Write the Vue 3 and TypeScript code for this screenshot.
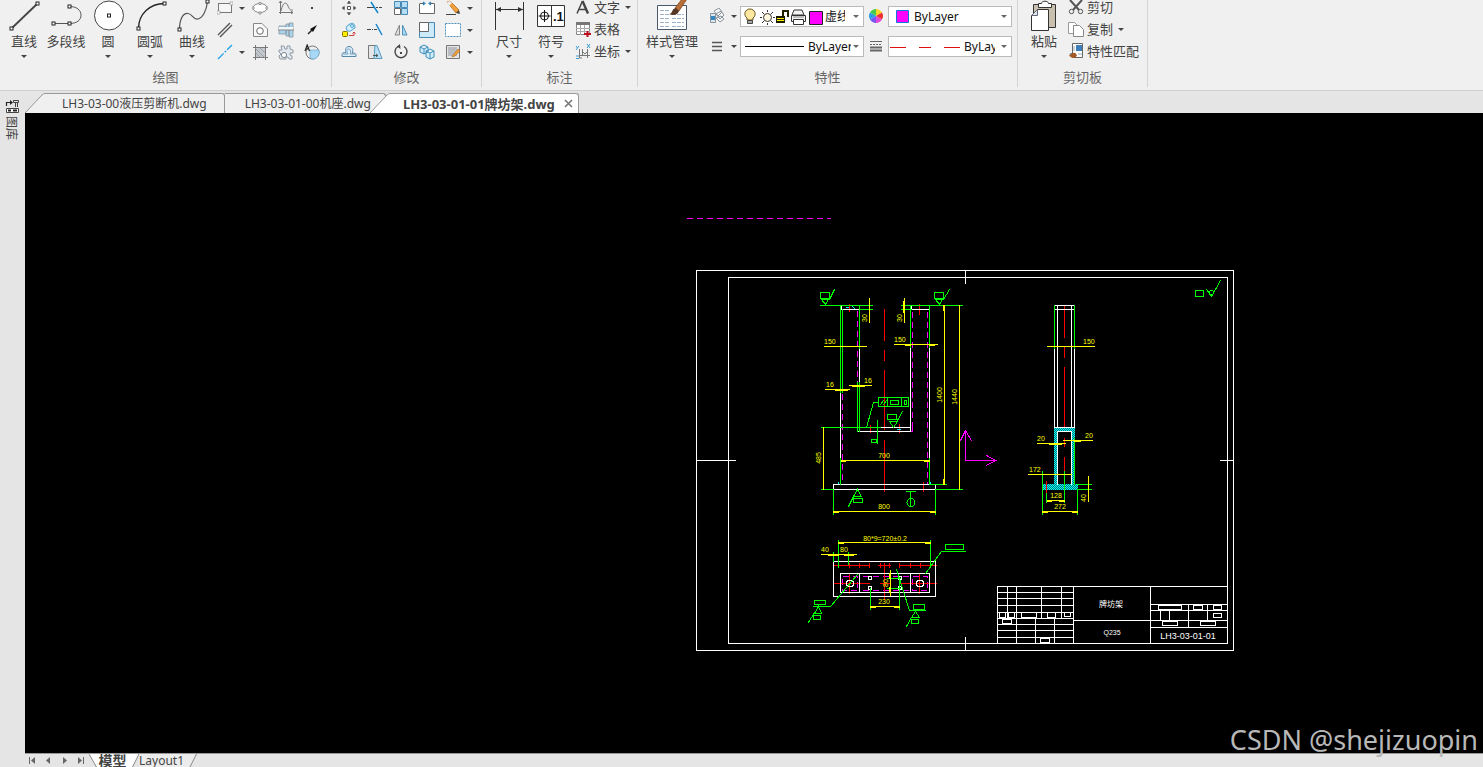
<script setup lang="ts">
import { ref } from 'vue'

interface Tool {
  name: string
  icon: string
  menu?: boolean
}

const node = (x: number, y: number) =>
  `<rect x="${x - 1.5}" y="${y - 1.5}" width="3" height="3" fill="#fff" stroke="#222" stroke-width="1"/>`

const drawLarge: Tool[] = [
  { name: '直线', menu: true, icon: `<path d="M8.500 28.500L34.500 3.500" stroke="#444" stroke-width="1.800"/>${node(8.5, 28.5)}${node(34.5, 3.5)}` },
  { name: '多段线', icon: `<path d="M8.500 23.500H24.500C32 23.500 36 20 36 15.200S32 6.500 24.500 6.500" stroke="#555"/>${node(8.5, 23.5)}${node(24.5, 23.5)}${node(24.5, 6.5)}` },
  { name: '圆', menu: true, icon: `<circle cx="22" cy="15.500" r="14.500" fill="#fff" stroke="#444"/>${node(22, 15.5)}` },
  { name: '圆弧', menu: true, icon: `<path d="M9.500 28.500C9.500 14 21 3.500 35.500 3.500" stroke="#222" stroke-width="1.300"/>${node(9.5, 28.5)}${node(35.5, 3.5)}` },
  { name: '曲线', menu: true, icon: `<path d="M8.500 29.500C8.500 19 12 13 17 13.500S22 20 27 19S35.500 10 36.500 1.500" stroke="#555" stroke-width="1.200"/>${node(8.5, 29.5)}${node(36.5, 1.5)}` },
]

const drawSmall: Tool[] = [
  { name: '矩形', menu: true, icon: '<rect x="1.500" y="3.500" width="13" height="9" fill="#f6f6f6" stroke="#777"/><path d="M0 11h3v3H0zM13 2h3v3h-3z" fill="#fff" stroke="#999" stroke-width=".7"/>' },
  { name: '椭圆', icon: '<ellipse cx="8" cy="8" rx="7" ry="4.500" fill="#fff" stroke="#888"/><path d="M7 2.500h2v2H7zM0 7h2v2H0zM14 7h2v2h-2zM7 12h2v2H7z" fill="#fff" stroke="#777" stroke-width=".7"/>' },
  { name: '函数曲线', icon: '<path d="M2.500 1V14M1 12.500H15M3 11C5 2 8 1 10 6S13 10 15 10M1 3l1.500-2L4 3M13 11l2 1.500-2 1.500" stroke="#777"/>' },
  { name: '点', icon: '<path d="M7 7h2v2H7z" fill="#444"/>' },
  { name: '平行线', icon: '<path d="M1 13L13 1M3 15L15 3" stroke="#555" stroke-width="1.400"/>' },
  { name: '孔', icon: '<path d="M1.500 1.500H10L15.500 7V14.500H1.500z" fill="#f8f8f8" stroke="#888"/><circle cx="8" cy="9" r="3.300" fill="#fff" stroke="#666"/>' },
  { name: '轴', icon: '<path d="M1 4h7v8H1zM8 2h3v12H8zM11 1h4v14h-4z" fill="#a9d4f0" stroke="#8a949c" stroke-width=".8"/><path d="M1 5h14v3H1z" fill="#eef6fc"/><path d="M0 8H16" stroke="#888"/>' },
  { name: '箭头', icon: '<path d="M4 12L9 7" stroke="#222" stroke-width="1.400"/><path d="M13 3L6 7l3 3z" fill="#111"/>' },
  { name: '中心线', menu: true, icon: '<path d="M1 15L15 1" stroke="#1aa0e8" stroke-width="1.300" stroke-dasharray="8 1.500 2 1.500"/>' },
  { name: '填充', icon: '<path d="M3 3h11v11H3z" fill="#c4c8cc"/><path d="M1 3.500H16M1 13.500H16M3.500 1V16M13.500 1V16" stroke="#777"/><path d="M3 8l6 6M3 4l10 10M7 3l7 7" stroke="#8d959d" stroke-width=".8"/>' },
  { name: '齿轮', icon: '<path d="M3 2h3l1 3h2V2h3v3l3 1v3h-3v2l2 1v3h-3l-1-2H8v2H2l-1-3 2-2-2-2V6h3z" fill="#e2e8ef" stroke="#8f99a3"/><circle cx="6" cy="11" r="2.600" fill="#fff" stroke="#7c8791"/>' },
  { name: '局部放大', icon: '<circle cx="8.500" cy="8.500" r="6.500" stroke="#777"/><path d="M6 6h9v4c-1 3-3 5-6 5-2 0-3-1-3-3z" fill="#a7d8f5" stroke="#69a9cf" stroke-width=".7"/><path d="M1 7L3.200 1 5.500 7M2 5h3" stroke="#222" stroke-width="1.200"/>' },
]

const modifySmall: Tool[] = [
  { name: '移动', icon: '<path d="M6.500 6.500h3v3h-3z" fill="#fff" stroke="#555"/><path d="M8 1v3M8 12v3M1 8h3M12 8h3" stroke="#444"/><path d="M5.500 3.500L8 1l2.500 2.500zM5.500 12.500L8 15l2.500-2.500zM3.500 5.500L1 8l2.500 2.500zM12.500 5.500L15 8l-2.500 2.500z" fill="#555"/>' },
  { name: '修剪', icon: '<path d="M0 7.500H7M9 7.500h2M12 7.500h3" stroke="#444"/><path d="M4 2L11 13" stroke="#1686d0" stroke-width="1.500"/>' },
  { name: '阵列', icon: '<path d="M1.500 1.500h6v6h-6zM8.500 1.500h6v6h-6zM8.500 8.500h6v6h-6z" fill="#b4ddf5" stroke="#4689b4"/><path d="M1.500 8.500h6v6h-6z" fill="#fff" stroke="#666"/>' },
  { name: '打断', icon: '<path d="M1 3.500H5M11 3.500h4.500V13.500H.5V3.500" fill="#fff" stroke="#666"/><path d="M4 2l2 1.500L4 5M12 2l-2 1.500L12 5" stroke="#2385c0" stroke-width="1.200"/>' },
  { name: '删除', menu: true, icon: '<path d="M2 2L5 1 14 10 11 13z" fill="#f0a13b" stroke="#b76b1e" stroke-width=".8"/><path d="M2 2L5 1l2 2-3 3z" fill="#eee"/><path d="M11 13l3-3 1 4z" fill="#444"/><path d="M1 14.500H11" stroke="#444"/>' },
  { name: '复制对象', icon: '<rect x="1.500" y="9.500" width="5" height="5" rx="1" fill="#ffed00" stroke="#887500"/><rect x="5" y="2" width="9" height="6" rx="3" transform="rotate(-35 10 5)" fill="#d7f0ff" stroke="#58a8d2"/><circle cx="11" cy="4" r="1.500" stroke="#58a8d2"/><path d="M8 13.500h5V10M11.500 11.500L13 10l1.500 1.500" stroke="#c44"/>' },
  { name: '延伸', icon: '<path d="M0 7.500h4M5 7.500h1M7 7.500h3" stroke="#444"/><path d="M9 2L15 13" stroke="#1686d0" stroke-width="1.500"/>' },
  { name: '镜像', icon: '<path d="M6.500 3v10H2z" fill="#ddd" stroke="#888"/><path d="M9.500 3v10H14z" fill="#a7d9f5" stroke="#4f91b7"/>' },
  { name: '缩放', icon: '<path d="M.5 .5h15v15H.5z" fill="#cdeafb" stroke="#4689b4"/><path d="M.5 .5h9v9h-9z" fill="#fff" stroke="#666"/>' },
  { name: '拉伸', menu: true, icon: '<path d="M.5 1.500h15v13H.5z" fill="#fff" stroke="#4b91b9" stroke-dasharray="2 1"/>' },
  { name: '偏移', icon: '<path d="M1 12.500h14v-2c0-1-2-2-4-1 2-4 0-7-3-7s-4 3-3 6c-2 0-4 0-4 2z" fill="#dceffc" stroke="#5887a8"/><path d="M2 10h5C5 6 6 5 8 5s2 3 1 5h5" stroke="#7ba2bc"/>' },
  { name: '倾斜', icon: '<path d="M1.500 1.500h8v13h-8z" fill="#e6e6e6" stroke="#777"/><path d="M8 1.500h2L15 14.500H7z" fill="#b9e0f6" stroke="#5a9ac0"/><path d="M6 11.500h5M9 10l2 1.500L9 13" stroke="#555"/>' },
  { name: '旋转', icon: '<path d="M5 2.500A6 6 0 1 0 11 2.500" stroke="#444" stroke-width="1.400"/><path d="M7 0L4 2.500 7.500 5z" fill="#444"/><path d="M7 8h2v2H7z" fill="#444"/>' },
  { name: '分解', icon: '<path d="M1 3l4-2 4 2v5l-4 2-4-2zM1 3l4 2 4-2M5 5v5M7 7l4-2 4 2v6l-4 2-4-2zM7 7l4 2 4-2M11 9v6" fill="#d4edfb" stroke="#418fb9"/>' },
  { name: '编辑填充', menu: true, icon: '<path d="M1.500 1.500h13v13h-13z" fill="#e4e4e4" stroke="#777"/><path d="M3 3h9v9H3z" fill="#b9bdc1"/><path d="M8 11l5-6 2 2-5 5-3 1z" fill="#f0a13b" stroke="#a46a27" stroke-width=".6"/>' },
]

const annotateLarge: Tool[] = [
  { name: '尺寸', menu: true, icon: '<path d="M7.500 2V30M35.500 2V30M8 9.500H35" stroke="#333"/><path d="M8 9.500l5-2.500v5zM35 9.500L30 7v5z" fill="#333"/>' },
  { name: '符号', menu: true, icon: '<path d="M7.500 5.500h27v21h-27zM21.500 5.500v21" fill="#fff" stroke="#333"/><circle cx="14.500" cy="16" r="4" stroke="#111"/><path d="M8.500 16h12M14.500 10v12" stroke="#111"/><text x="23" y="21" font-family="Liberation Sans, sans-serif" font-weight="700" font-size="13" fill="#111">.1</text>' },
]

const annotateRows: Tool[] = [
  { name: '文字', menu: true, icon: '<path d="M2 14.500L7.500 2M4 10.500h7" stroke="#444" stroke-width="1.500"/><path d="M7.500 2L13 14.500" stroke="#444" stroke-width="2.400"/>' },
  { name: '表格', icon: '<path d="M1.500 1.500h13v12h-13z" fill="#fff" stroke="#888"/><path d="M1 1h14v3H1z" fill="#777"/><path d="M1 7.500h14M1 10.500h14M5.500 4v10M9.500 4v10" stroke="#aaa"/><path d="M9 13h7M12.500 10v6" stroke="#c00d1c" stroke-width="2"/>' },
  { name: '坐标', menu: true, icon: '<path d="M4.500 6v9H7M4 12.500h11M7.500 6v7M12.500 6v9M7 8l3 3 3-3" stroke="#777"/><path d="M1 3l1.500 2M4 3L1 7M12 1l3 4M15 1l-3 4M1 13h3M1 15.500h3" stroke="#3b9bd0"/>' },
]

const styleIcon =
  '<path d="M6.500 5.500h29v24h-29z" fill="#fff" stroke="#46586a"/><path d="M9 10.500h9M9 14.500h9M9 18.500h9M9 22.500h9M9 26.500h9M21 14.500h12M21 18.500h12M21 22.500h12M21 26.500h12" stroke="#9cb0c6" stroke-dasharray="4 1"/><path d="M24 8L31-1h5L28 11z" fill="#b86e36" stroke="#70401d" stroke-width=".7"/><path d="M18 14c4 0 2-5 7-6l3 3c-1 4-6 5-10 3z" fill="#553523"/>'
const pasteIcon =
  '<path d="M10.500 4.500h22v23h-22z" fill="#c9bfae" stroke="#333"/><path d="M15.500 3.500h3c0-3 7-3 7 0h3v4h-13z" fill="#fff" stroke="#333"/><path d="M14.500 9.500h11v21h-17v-15z" fill="#fff" stroke="#333"/><path d="M8.500 15.500l6-6v6z" fill="#dde4ec" stroke="#667"/>'

const clipRows: Tool[] = [
  { name: '剪切', icon: '<path d="M2 1l9 10M14 1L5 11" stroke="#555" stroke-width="2"/><circle cx="3.500" cy="12.500" r="2.200" fill="#eee" stroke="#555"/><circle cx="12.500" cy="12.500" r="2.200" fill="#eee" stroke="#555"/>' },
  { name: '复制', menu: true, icon: '<path d="M.5 1.500h6l3 3v8h-9z" fill="#fff" stroke="#999"/><path d="M5.500 4.500h6l4 4v7h-10z" fill="#fff" stroke="#888"/>' },
  { name: '特性匹配', icon: '<path d="M4.500 .5h10v14h-10z" fill="#fff" stroke="#666"/><path d="M8 2h6v6H8z" fill="#3c7fba"/><path d="M6 3v5M6 11h2M10 11h4" stroke="#9ab"/><path d="M1 12c3 0 3-3 6-2l2 2c-1 4-6 4-8 0z" fill="#a35a24"/><path d="M1 11l3-1v2z" fill="#666"/>' },
]

const fileTabs = ['LH3-03-00液压剪断机.dwg', 'LH3-03-01-00机座.dwg', 'LH3-03-01-01牌坊架.dwg']
const activeTab = ref(2)
const navIcons: Tool[] = [
  { name: '第一个', icon: '<path d="M1.500 2v7" stroke="#666"/><path d="M7 2v7L3 5.500z" fill="#666"/>' },
  { name: '上一个', icon: '<path d="M6 2v7L2 5.500z" fill="#666"/>' },
  { name: '下一个', icon: '<path d="M3 2v7l4-3.500z" fill="#666"/>' },
  { name: '最后一个', icon: '<path d="M2 2v7l4-3.500z" fill="#666"/><path d="M7.500 2v7" stroke="#666"/>' },
]

interface Label {
  t: string
  x: number
  y: number
  up?: boolean
  mid?: boolean
}

const dims: Label[] = [
  { t: '30', x: 867, y: 318, up: true },
  { t: '30', x: 902, y: 318, up: true },
  { t: '150', x: 824, y: 344 },
  { t: '150', x: 894, y: 342 },
  { t: '16', x: 826, y: 387 },
  { t: '16', x: 864, y: 383 },
  { t: '1400', x: 942, y: 395, up: true },
  { t: '1440', x: 957, y: 397, up: true },
  { t: '485', x: 821, y: 458, up: true },
  { t: '700', x: 884, y: 458, mid: true },
  { t: '800', x: 884, y: 509, mid: true },
  { t: '80*9=720±0.2', x: 885, y: 541, mid: true },
  { t: '40', x: 821, y: 552 },
  { t: '80', x: 840, y: 552 },
  { t: '80', x: 888, y: 583, up: true },
  { t: '230', x: 884, y: 604, mid: true },
  { t: '150', x: 1083, y: 344 },
  { t: '20', x: 1037, y: 441 },
  { t: '20', x: 1085, y: 438 },
  { t: '172', x: 1029, y: 472 },
  { t: '128', x: 1056, y: 498, mid: true },
  { t: '272', x: 1060, y: 509, mid: true },
  { t: '40', x: 1086, y: 498, up: true },
]
</script>

<template>
  <div class="app">
    <header class="ribbon">
      <section class="group draw">
        <div class="tools">
          <button v-for="t in drawLarge" :key="t.name" class="large">
            <svg width="42" height="32" v-html="t.icon"></svg>
            <span>{{ t.name }}</span>
            <i v-if="t.menu" class="caret"></i>
          </button>
          <div class="small draw-grid">
            <button v-for="t in drawSmall" :key="t.name" class="mini" :aria-label="t.name">
              <svg width="16" height="16" v-html="t.icon"></svg>
              <i v-if="t.menu" class="caret"></i>
            </button>
          </div>
        </div>
        <h2>绘图</h2>
      </section>

      <section class="group modify">
        <div class="tools">
          <div class="small modify-grid">
            <button v-for="t in modifySmall" :key="t.name" class="mini" :aria-label="t.name">
              <svg width="16" height="16" v-html="t.icon"></svg>
              <i v-if="t.menu" class="caret"></i>
            </button>
          </div>
        </div>
        <h2>修改</h2>
      </section>

      <section class="group annotate">
        <div class="tools">
          <button v-for="t in annotateLarge" :key="t.name" class="large">
            <svg width="42" height="32" v-html="t.icon"></svg>
            <span>{{ t.name }}</span>
            <i class="caret"></i>
          </button>
          <div class="rows">
            <button v-for="t in annotateRows" :key="t.name" class="row">
              <svg width="16" height="16" v-html="t.icon"></svg>
              <span>{{ t.name }}</span>
              <i v-if="t.menu" class="caret"></i>
            </button>
          </div>
        </div>
        <h2>标注</h2>
      </section>

      <section class="group props">
        <div class="tools">
          <button class="large wide">
            <svg width="42" height="32" v-html="styleIcon"></svg>
            <span>样式管理</span>
            <i class="caret"></i>
          </button>
          <div class="prop-grid">
            <button class="mini" aria-label="图层">
              <svg width="16" height="16">
                <path d="M5 3l5-3 3 4-4 4zM7 6l5-3 3 4-4 4zM7 10l5-2 3 3-4 3z" fill="#f4f4f4" stroke="#8a949d" />
                <path d="M1.500 5.500h5v9h-5z" fill="#dfe6ec" stroke="#8a949d" />
                <path d="M2 8h4v4H2z" fill="#3387c2" />
              </svg>
              <i class="caret"></i>
            </button>
            <div class="combo layer">
              <svg width="80" height="19" class="layer-icons">
                <path d="M6 11C2 8 4 2 9 2s7 6 3 9v2H6z" fill="#ffe9a0" stroke="#66521d" />
                <path d="M6.500 13.500h5v3h-5z" fill="#aaa" stroke="#444" />
                <circle cx="26.500" cy="10.500" r="4" fill="#fff7dc" stroke="#333" />
                <path d="M26.500 3v2M26.500 16v2M19 10.500h2M32 10.500h2M21 5l2 2M30 14l2 2M32 5l-2 2M23 14l-2 2" stroke="#333" />
                <path d="M35 9h9v7h-9z" fill="#1c1c00" />
                <path d="M36 11.500h7M36 13.500h7" stroke="#ffef00" />
                <path d="M42 9V4h5v6" stroke="#222200" stroke-width="2" fill="none" />
                <path d="M53 3h8l2 5H51zM50.500 8.500h14v6h-14z" fill="#f4f4f4" stroke="#333" />
                <path d="M52.500 12.500h10v5h-10z" fill="#fff" stroke="#333" />
                <path d="M52 10h11" stroke="#888" />
                <path d="M68.500 4.500h13v13h-13z" fill="#f0f" stroke="#222" />
              </svg>
              <select aria-label="当前图层"><option>虚线层</option></select>
              <i class="caret"></i>
            </div>
            <svg width="14" height="14" class="between">
              <path d="M7 7V0A7 7 0 0 1 13 3.500z" fill="#f9d624" />
              <path d="M7 7L13 3.500A7 7 0 0 1 13 10.500z" fill="#f22e2e" />
              <path d="M7 7L13 10.500A7 7 0 0 1 7 14z" fill="#e447d6" />
              <path d="M7 7V14A7 7 0 0 1 1 10.500z" fill="#7757ee" />
              <path d="M7 7L1 10.500A7 7 0 0 1 1 3.500z" fill="#2a9ae8" />
              <path d="M7 7L1 3.500A7 7 0 0 1 7 0z" fill="#47c94d" />
            </svg>
            <div class="combo">
              <svg width="25" height="19"><path d="M7.500 3.500h12v12h-12z" fill="#f0f" stroke="#0877d5" /></svg>
              <select aria-label="颜色"><option>ByLayer</option></select>
              <i class="caret"></i>
            </div>
            <button class="mini" aria-label="线宽">
              <svg width="16" height="16"><path d="M3 4.500h10M3 8.500h10M3 12.500h10" stroke="#555" stroke-width="1.500" /></svg>
              <i class="caret"></i>
            </button>
            <div class="combo">
              <svg width="67" height="19"><path d="M4 9.500H63" stroke="#000" /></svg>
              <select aria-label="线型"><option>ByLayer</option></select>
              <i class="caret"></i>
            </div>
            <svg width="14" height="14" class="between">
              <path d="M1 2.500h12" stroke="#666" />
              <path d="M1 5.500h12" stroke="#666" stroke-dasharray="2 1" />
              <path d="M1 8.500h12M1 11.500h12" stroke="#666" stroke-width="2" />
            </svg>
            <div class="combo short">
              <svg width="75" height="19"><path d="M1 10.500h16M30 10.500h12M55 10.500h16" stroke="#e01010" /></svg>
              <select aria-label="线宽样式"><option>ByLayer</option></select>
              <i class="caret"></i>
            </div>
          </div>
        </div>
        <h2>特性</h2>
      </section>

      <section class="group clip">
        <div class="tools">
          <button class="large">
            <svg width="42" height="32" v-html="pasteIcon"></svg>
            <span>粘贴</span>
            <i class="caret"></i>
          </button>
          <div class="rows">
            <button v-for="t in clipRows" :key="t.name" class="row">
              <svg width="16" height="16" v-html="t.icon"></svg>
              <span>{{ t.name }}</span>
              <i v-if="t.menu" class="caret"></i>
            </button>
          </div>
        </div>
        <h2>剪切板</h2>
      </section>
    </header>

    <div class="body">
      <aside class="side">
        <button class="library">
          <svg width="15" height="16">
            <path d="M1.500 8V4.500H6" stroke="#222" stroke-width="1.200" />
            <path d="M5 2l3 2.500L5 7z" fill="#222" />
            <path d="M8.500 2.500h5v2h-5zM10.500 5v4M12.500 5v4" stroke="#444" />
            <path d="M1.500 10.500h12v4h-12z" fill="#fff" stroke="#444" />
            <path d="M3 12.500h3M8 12.500h4" stroke="#222" stroke-width="2" />
          </svg>
          <span>图库</span>
        </button>
      </aside>

      <div class="work">
        <nav class="tabs">
          <button
            v-for="(name, i) in fileTabs"
            :key="name"
            class="tab"
            :class="{ on: activeTab === i, inner: i === 1 }"
            @click="activeTab = i"
          >
            <svg v-if="i !== 1" width="20" height="20" class="slope">
              <path d="M0 20L17 2Q18.500 .5 20 .5V20z" class="slope-fill" />
              <path d="M0 20L17 2Q18.500 .5 20 .5" class="slope-line" />
            </svg>
            <span class="tab-face">{{ name }}<svg v-if="activeTab === i" width="9" height="9" class="close"><path d="M1 1l7 7M8 1L1 8" stroke="#777" stroke-width="1.600" /></svg></span>
          </button>
        </nav>

        <main class="canvas">
          <svg class="drawing" role="img" aria-label="LH3-03-01-01牌坊架">
            <defs>
              <pattern id="hatch" width="2" height="2" patternUnits="userSpaceOnUse">
                <path d="M0 0h2v2H0z" fill="#077" />
                <path d="M0 0h1v1H0zM1 1h1v1H1z" fill="#0ff" />
              </pattern>
            </defs>
            <g transform="translate(-25 -113)">
              <path fill="url(#hatch)" fill-rule="evenodd" d="M1054 427H1075V484H1078V490H1042V484H1054zM1058 432V484H1071V432z" />
              <g transform="translate(.5 .5)" class="lines">
                <g class="magenta">
                  <path class="dash" d="M686 218H830M842 393V484M857 310V382M912 311V431M927 311V484" />
                  <path class="dash" d="M842 576H857V590H842zM912 576H927V590H912zM862 576H908M862 590H908" />
                  <path d="M910 431H912V427M965 460V430M960 440L965 430 971 440M965 460H995M986 455L995 460 986 465" />
                </g>

                <g class="red">
                  <path d="M849 304V311M919 304V314M884 309V340M884 350V360M884 370V429M884 440V491M870 425V432M899 424V432M923 482V491" />
                  <path d="M833 565H868M878 565H890M899 565H936M849 563V567M859 563V567M869 563V567M880 563V567M889 563V567M899 563V567M910 563V567M920 563V567M884 563V599M833 583H869M880 583H889M900 583H936M849 573V593M919 573V593" />
                  <path d="M1064 306V337M1064 347V357M1064 367V426M1064 438V446M1064 457V471M1046 481V492" />
                </g>

                <g class="white">
                  <path d="M696 270H1233V650H696zM728 277H1227V643H728zM965 270V283M965 637V650M696 460H735M1220 460H1233" />
                  <path d="M841 305H859V309H841zM911 305H929V309H911zM840 392V458M859 349V382M910 348V431M929 348V458M881 427H910M857 431H910M833 484H935V489H833z" />
                  <path d="M833 561H935V596H833zM840 573H929V592H840zM859 573V592M910 573V592M868 576H871V579H868zM868 586H871V589H868zM898 576H901V579H898zM898 586H901V589H898z" />
                  <circle cx="849.500" cy="583" r="3.500" />
                  <circle cx="919.500" cy="583" r="3.500" />
                  <path d="M1054 305H1074V309H1054zM1054 349V427M1074 349V427M1057 305V427M1071 305V427M1054 427H1074M1057 484V431H1071V484" />
                </g>

                <g class="cyan">
                  <path d="M846 307H848M852 306L854 308M897 429H900M838 483V482M930 483V482" />
                </g>

                <g class="green">
                  <path d="M820 305H872M901 305H962M859 309H872M901 309H911M840 305V392M842 309V392M857 382V431M859 305V348M859 382V431M910 305V347M929 305V347M840 458V484M929 458V484M821 427H880M821 489H833M935 489H962M929 484H946M833 489V514M935 489V514" />
                  <path d="M820 292H829V298H820zM821 299H828L825 304zM829 299L834 289M934 292H943V298H934zM935 299H942L939 304zM943 299L949 289" />
                  <path d="M878 397H908V406H878zM887 397V406M901 397V406M890 400H898V404H890zM904 400H906V404H904zM880 404L883 400M883 404L886 400M878 402H873L866 427" />
                  <path d="M887 414H896V419H887zM889 421H897L893 427zM897 420L902 411M877 420V443M871 439H876V442H871z" />
                  <path d="M857 489L853 496H861zM853 498H862V502H853zM853 496L848 506M906 491H915M910 491V506" />
                  <circle cx="910.500" cy="502" r="4" />
                  <path d="M838 540V567M930 540V567M833 552V561M848 552V564M887 578H900M887 588H900M870 588V609M899 578V609" />
                  <path d="M925 573L941 551H965M945 544H963V549H945zM857 574L830 606H813M814 600H825V604H814zM818 606L814 613H821zM813 615H820V619H813zM814 612L808 622" />
                  <path d="M896 569L909 610H925M913 604H924V609H913zM915 611L911 617H919zM911 619H918V623H911zM911 617L906 626" />
                  <path d="M1054 305V348M1074 305V348M1074 438V484M1064 471V502M1042 471V514M1077 489V514M1046 493V502M1077 484H1091M1077 489H1091" />
                  <path d="M1195 290H1203V296H1195zM1206 289L1211 296 1220 280" />
                  <circle cx="1211" cy="292" r="2" />
                </g>

                <g class="yellow">
                  <path d="M869 298V322M904 298V322M903 301V312M824 346H866M894 344H937M905 345H910M929 345H934M825 389H849M835 390H847M849 385H871M852 386H864" />
                  <path d="M944 305V484M943 305V310M943 479V484M959 305V489M823 427V489M841 460H929M841 461H845M924 461H929M833 511H935M833 512H838M930 512H935" />
                  <path d="M838 542H930M838 543H843M925 543H930M821 554H856M828 555H838M844 555H853M890 570V595M889 573V578M889 587V592M870 606H899M870 607H875M894 607H899" />
                  <path d="M1047 346H1094M1037 443H1065M1049 444H1061M1063 440H1092M1074 441H1080M1028 474H1071M1047 500H1064M1047 501H1051M1059 501H1064M1042 511H1077M1042 512H1047M1072 512H1077M1088 476V501" />
                </g>

                <g class="white">
                  <path d="M997 586H1227V643H997zM1073 586V643M1150 586V643M1073 620H1150M997 592H1073M997 598H1073M997 605H1073M997 612H1073M997 618H1073M997 624H1073M997 630H1073M997 637H1073" />
                  <path d="M1007 586V618M1016 586V643M1041 586V618M1061 586V618M1035 618V643M1054 618V643M1150 604H1227M1150 610H1227M1150 620H1227M1150 627H1227M1160 610V620M1169 610V620M1188 604V627M1207 604V620" />
                  <path fill="#000" d="M999 612H1005V617H999zM1008 612H1014V617H1008zM1021 612H1036V617H1021zM1047 612H1055V617H1047zM1064 612H1070V616H1064zM1002 619H1011V623H1002zM1040 638H1049V642H1040zM1158 605H1181V609H1158zM1193 605H1202V609H1193zM1213 605H1221V609H1213zM1213 613H1221V617H1213zM1162 621H1177V625H1162zM1200 621H1215V625H1200z" />
                </g>
              </g>

              <g class="dims">
                <text
                  v-for="(d, i) in dims"
                  :key="i"
                  :x="d.x"
                  :y="d.y"
                  :text-anchor="d.mid || d.up ? 'middle' : 'start'"
                  :transform="d.up ? `rotate(-90 ${d.x} ${d.y})` : undefined"
                >{{ d.t }}</text>
              </g>
              <g class="title" text-anchor="middle">
                <text x="1111" y="607">牌坊架</text>
                <text x="1112" y="635" class="material">Q235</text>
                <text x="1188" y="639" class="number">LH3-03-01-01</text>
              </g>
            </g>
          </svg>
        </main>

        <footer class="layouts">
          <button v-for="n in navIcons" :key="n.name" class="nav" :aria-label="n.name">
            <svg width="9" height="11" v-html="n.icon"></svg>
          </button>
          <button class="sheet model">
            <svg width="50" height="13" class="sheet-shape">
              <path d="M0 0H50L43 14H8z" fill="#fff" />
              <path d="M0 0L8 14M50 0L43 14" stroke="#888" />
            </svg>
            <span>模型</span>
          </button>
          <button class="sheet"><span>Layout1</span>
            <svg width="9" height="13"><path d="M0 0H8.500L1.500 14H0z" fill="#ececec" /><path d="M8.500 0L1.500 14" stroke="#888" /></svg>
          </button>
        </footer>
      </div>
    </div>
    <div class="watermark">CSDN @shejizuopin</div>
  </div>
</template>

<style>
html,
body {
  margin: 0;
  height: 100%;
  overflow: hidden;
}
</style>

<style scoped>
.app {
  position: relative;
  display: flex;
  flex-direction: column;
  height: 100vh;
  overflow: hidden;
  background: #e5e5e5;
  color: #444;
  font: 13px/18px 'Noto Sans', 'Noto Sans CJK SC', sans-serif;
}
button {
  padding: 0;
  border: 0;
  background: none;
  color: inherit;
  font: inherit;
  white-space: nowrap;
}
svg {
  display: block;
  flex: none;
  fill: none;
}
.ribbon {
  display: flex;
  flex: none;
  height: 90px;
  overflow: hidden;
  background: #f0f0f0;
  border-bottom: 1px solid #d0d0d0;
}
.group {
  display: flex;
  flex-direction: column;
  box-sizing: border-box;
  height: 87px;
  border-right: 1px solid #d4d4d4;
}
.group h2 {
  margin: 0;
  color: #666;
  font-size: 13px;
  font-weight: 400;
  line-height: 18px;
  text-align: center;
}
.tools {
  display: flex;
  height: 68px;
}
.draw .tools { padding: 0 11px 0 3px; }
.modify .tools { padding: 0 8px 0 9px; }
.annotate .tools { padding: 0 6px 0 6px; }
.props .tools { padding: 0 5px 0 8px; }
.clip .tools { padding: 0 8px 0 5px; }
.large {
  display: flex;
  flex-direction: column;
  align-items: center;
  width: 42px;
}
.large.wide { width: 52px; }
.large .caret { margin-top: 5px; }
.caret {
  flex: none;
  width: 0;
  height: 0;
  border: 3px solid transparent;
  border-top-color: #444;
  border-bottom: 0;
}
.small {
  display: grid;
  grid-auto-rows: 22px;
  height: 66px;
  margin-top: -3px;
}
.draw-grid {
  grid-template-columns: 35px 26px 26px 16px;
  margin-left: 4px;
}
.modify-grid { grid-template-columns: repeat(4, 26px) 28px; }
.mini {
  display: flex;
  align-items: center;
  gap: 6px;
}
.rows {
  display: flex;
  flex-direction: column;
  margin: -4px 0 0 3px;
}
.row {
  display: flex;
  align-items: center;
  height: 22px;
  gap: 3px;
  line-height: 14px;
}
.row .caret { margin-left: 2px; }
.prop-grid {
  display: grid;
  grid-template-columns: 31px 124px 24px 124px;
  grid-auto-rows: 22px;
  row-gap: 8px;
  align-items: center;
  margin: 5px 0 0 11px;
}
.between { justify-self: center; }
.combo {
  display: flex;
  align-items: center;
  box-sizing: border-box;
  height: 21px;
  border: 1px solid #bbb;
  background: #fff;
}
.combo select {
  appearance: none;
  flex: 1;
  min-width: 0;
  height: 19px;
  padding: 0;
  border: 0;
  background: none;
  color: #111;
  font: 12px/19px 'Noto Sans', 'Noto Sans CJK SC', sans-serif;
  text-overflow: clip;
  overflow: hidden;
}
.combo .caret {
  margin: 0 4px 0 2px;
  border-top-color: #666;
}
.layer .caret { margin-left: 8px; }
.short .caret { margin-left: 6px; }
.layer-icons { margin-right: 4px; overflow: visible; }
.body {
  display: flex;
  flex: 1;
  min-height: 0;
}
.side {
  width: 25px;
  padding-top: 7px;
  box-sizing: border-box;
}
.library {
  display: flex;
  flex-direction: column;
  gap: 2px;
  padding-left: 5px;
  font-size: 12px;
  line-height: 13px;
}
.library span {
  align-self: flex-start;
  writing-mode: vertical-rl;
  text-orientation: sideways;
}
.work {
  display: flex;
  flex: 1;
  flex-direction: column;
  min-width: 0;
}
.tabs {
  display: flex;
  flex: none;
  height: 22px;
  align-items: flex-end;
  font-size: 12px;
}
.tab {
  display: flex;
  height: 20px;
}
.tab-face {
  display: flex;
  align-items: center;
  box-sizing: border-box;
  height: 20px;
  padding: 0 17px;
  border: 1px solid #999;
  border-width: 1px 1px 0 0;
  border-top-right-radius: 3px;
  background: #f0f0f0;
}
.inner .tab-face { padding: 0 14px 0 20px; }
.tab.on {
  margin-left: -16px;
  font-size: 13px;
  font-weight: 700;
}
.on .tab-face {
  padding: 0 5px 0 13px;
  background: #fff;
}
.slope-fill { fill: #f0f0f0; }
.on .slope-fill { fill: #fff; }
.slope-line { stroke: #999; }
.close { margin-left: 9px; }
.canvas {
  flex: 1;
  min-height: 0;
  background: #000;
}
.drawing {
  width: 100%;
  height: 100%;
  shape-rendering: crispEdges;
}
.lines { stroke-linecap: square; }
.white { stroke: #fff; }
.green { stroke: #0f0; }
.yellow { stroke: #ff0; }
.magenta { stroke: #f0f; }
.red { stroke: #f00; }
.cyan { stroke: #0ff; }
.dash {
  stroke-dasharray: 6 4;
  stroke-linecap: butt;
}
.dims {
  fill: #ff0;
  font: 7px 'Liberation Sans', sans-serif;
}
.title {
  fill: #fff;
  font: 8px 'Noto Sans CJK SC', sans-serif;
}
.material { font: 7px 'Liberation Sans', sans-serif; }
.number { font: 9px 'Liberation Sans', sans-serif; }
.layouts {
  display: flex;
  flex: none;
  height: 13px;
  overflow: hidden;
  border-top: 1px solid #999;
}
.nav {
  width: 16px;
  height: 13px;
  padding-left: 3px;
}
.sheet {
  display: flex;
  height: 13px;
  padding-left: 3px;
  line-height: 13px;
  font-size: 12px;
}
.sheet span {
  padding-right: 4px;
  background: #ececec;
}
.model {
  position: relative;
  width: 47px;
  justify-content: center;
  padding: 0;
  font-size: 14px;
  font-weight: 700;
}
.model span {
  position: relative;
  padding: 0;
  background: none;
}
.sheet-shape {
  position: absolute;
  top: 0;
  left: 0;
}
.watermark {
  position: absolute;
  right: 5px;
  bottom: 9px;
  color: #b8b8b8;
  font: 27px/36px 'Noto Sans', sans-serif;
  pointer-events: none;
}
</style>
